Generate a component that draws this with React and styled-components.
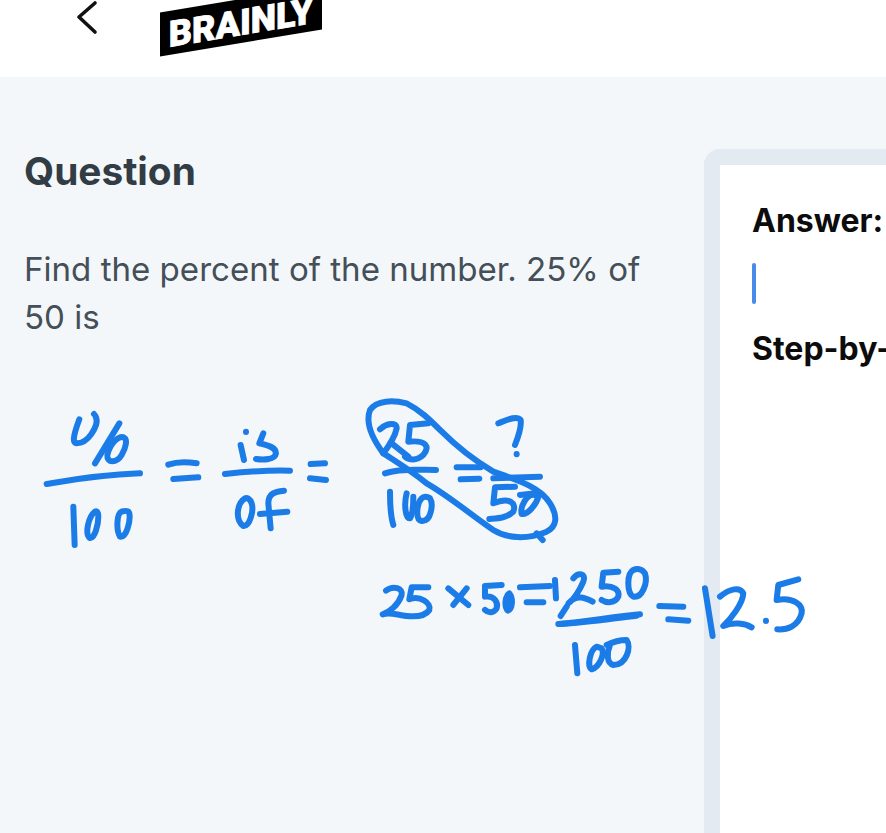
import styled, { createGlobalStyle } from "styled-components";

const GlobalStyle = createGlobalStyle`
	html, body {
		margin: 0;
		padding: 0;
		background: #f4f7fa;
	}
`;

const Page = styled.div`
	position: relative;
	width: 886px;
	height: 833px;
	overflow: hidden;
	display: flex;
	flex-direction: column;
	font-family: "Inter", "Open Sans", sans-serif;
	background: #f4f7fa;
`;

const Header = styled.header`
	flex: 0 0 77px;
	display: flex;
	align-items: flex-start;
	padding-left: 76px;
	background: #fff;
	overflow: hidden;
`;

const BackIcon = styled.svg`
	width: 22px;
	height: 36px;
	margin-right: 62px;
	fill: none;
	stroke: #111;
	stroke-width: 3.6;
	stroke-linecap: round;
	stroke-linejoin: round;
`;

const Logo = styled.div`
	width: 162px;
	height: 44px;
	margin-top: -1px;
	padding-top: 3px;
	box-sizing: border-box;
	display: flex;
	align-items: center;
	justify-content: center;
	background: #000;
	color: #fff;
	font-family: "Roboto", sans-serif;
	font-size: 36px;
	font-weight: 900;
	-webkit-text-stroke: 0.8px #fff;
	transform: skewY(-9.5deg);
`;

const Main = styled.main`
	flex: 1;
	display: flex;
	min-height: 0;
`;

const QuestionColumn = styled.section`
	flex: 0 0 704px;
	padding: 72px 50px 0 24px;
	box-sizing: border-box;
`;

const Title = styled.h2`
	margin: 0 0 52px;
	font-size: 38.8px;
	line-height: 44px;
	font-weight: 700;
	color: #323c45;
`;

const Body = styled.p`
	margin: 0;
	font-size: 33.1px;
	line-height: 48px;
	color: #444f58;
`;

const AnswerCard = styled.section`
	flex: 1;
	margin-top: 72px;
	padding: 40px 0 0 32px;
	background: #fff;
	border: solid #e3eaf1;
	border-width: 16px 0 0 16px;
	border-top-left-radius: 16px;
	overflow: hidden;
	white-space: nowrap;
`;

const CardHeading = styled.h3`
	margin: 0;
	font-size: 32px;
	line-height: 32px;
	font-weight: 700;
	color: #0c0c0c;
`;

const Caret = styled.div`
	width: 3.5px;
	height: 41px;
	margin: 26px 0 29px;
	border-radius: 2px;
	background: #4a8ae8;
`;

const Ink = styled.svg`
	position: absolute;
	left: 0;
	top: 0;
	width: 886px;
	height: 833px;
	pointer-events: none;
	fill: none;
	stroke: #1b7ce8;
	stroke-linecap: round;
	stroke-linejoin: round;
`;

const firstFractions = [
	"M148 88C125 150 130 158 140 160C180 160 198 105 198 105C205 85 192 72 192 72",
	"M268 100L195 220",
	"M285 145C270 130 240 160 232 195C230 220 260 220 275 195C290 170 290 150 285 145",
	"M50 282C120 270 200 255 330 250",
	"M130 350L134 465",
	"M195 365C175 380 165 430 178 443C195 450 205 400 205 380C205 365 200 362 195 365",
	"M275 365C260 370 258 420 270 440C290 445 302 390 298 370C295 360 285 362 275 365",
	"M415 224C440 215 470 215 500 220",
	"M430 267L505 262",
	"M648 125L648 126",
	"M632 165L642 210",
	"M700 130L688 160C710 165 738 170 738 190C735 210 700 210 678 207",
	"M585 252C650 245 720 240 780 242",
	"M645 325C620 340 615 390 640 408C660 410 672 360 665 340C660 325 650 322 645 325",
	"M762 302C735 305 715 310 715 340L722 415",
	"M690 372L772 365",
	"M842 222L885 220",
	"M840 265L888 270",
];

const circledFractions = [
	"M100 190C70 150 45 100 60 60C80 30 130 30 170 40C210 60 240 90 270 120C310 160 370 210 430 245C500 270 570 290 600 340C625 380 620 410 590 425C530 450 470 445 430 420C370 380 300 320 230 280C180 240 130 210 100 190",
	"M560 430L578 450",
	"M90 118C110 100 140 95 140 115C135 140 115 170 100 190",
	"M125 160L175 200",
	"M235 100L180 105L175 155C230 150 240 170 220 195C200 215 175 210 165 200",
	"M105 250C150 235 210 240 258 240",
	"M320 232L392 232",
	"M332 268L388 266",
	"M445 100C470 90 500 75 512 90C515 110 505 140 495 165",
	"M500 192L500 193",
	"M430 265L570 260",
	"M120 305C120 340 122 380 130 405",
	"M170 310C162 340 165 385 180 385C190 370 190 340 190 320",
	"M215 325C200 340 195 390 215 393C245 395 250 340 240 325C230 318 220 320 215 325",
	"M495 290L435 292L430 340C480 320 500 340 490 365C470 385 440 385 418 387",
	"M555 315C530 310 510 350 515 372C535 375 560 340 565 320",
	"M510 315L570 308",
];

const product = [
	"M48 122C70 105 100 115 95 135C85 165 60 185 38 193C60 185 80 195 110 198",
	"M175 112L125 112L118 148C150 135 185 160 178 180C165 200 130 200 110 198",
	"M235 115L295 165",
	"M290 115L250 165",
	"M395 105L345 108L345 140C375 135 385 160 380 175C370 190 355 190 345 180",
	"M413 135C403 150 405 175 414 182C428 175 430 145 418 130",
	"M408 150C406 165 412 175 420 165",
	"M450 112L540 108",
	"M470 157L520 157",
	"M555 90L558 145",
	"M590 170L572 198",
	"M610 85C625 65 650 70 640 95C630 120 610 150 595 160C620 130 650 145 668 155",
	"M745 65L700 68L695 110C730 105 750 120 745 140C735 160 710 160 695 150",
	"M790 60C770 70 770 130 790 140C815 145 835 100 825 70C815 55 800 55 790 60",
	"M565 222C650 215 730 200 810 193",
	"M570 222C650 218 730 205 800 197",
	"M615 285L622 370",
	"M680 290C660 300 650 350 665 358C690 350 705 310 695 295Z",
	"M720 285C710 310 710 340 730 345C770 345 785 290 770 270C750 270 730 275 710 285",
	"M868 168L940 170",
	"M895 208L955 212",
	"M1005 115L1028 258",
	"M1050 140C1080 115 1110 110 1120 130C1120 160 1080 210 1060 228C1090 215 1125 220 1145 232",
	"M1188 212L1188 213",
	"M1285 88L1225 105L1220 150C1270 140 1300 165 1295 190C1285 230 1250 240 1222 238",
];

// traced in the coordinates of 3x crops, hence the scale
const Strokes = ({ x, y, paths }) => (
	<g transform={`translate(${x} ${y}) scale(0.3333)`} strokeWidth="18">
		{paths.map((d) => (
			<path key={d} d={d} />
		))}
	</g>
);

const App = () => (
	<Page>
		<GlobalStyle />
		<Header>
			<BackIcon viewBox="0 0 22 36">
				<path d="M19 3L3 17L19 32" />
			</BackIcon>
			<Logo>BRAINLY</Logo>
		</Header>
		<Main>
			<QuestionColumn>
				<Title>Question</Title>
				<Body>Find the percent of the number. 25% of 50 is</Body>
			</QuestionColumn>
			<AnswerCard>
				<CardHeading>Answer:</CardHeading>
				<Caret />
				<CardHeading>Step-by-step explanation:</CardHeading>
			</AnswerCard>
		</Main>
		<Ink viewBox="0 0 886 833">
			<Strokes x={30} y={390} paths={firstFractions} />
			<Strokes x={350} y={390} paths={circledFractions} />
			<Strokes x={370} y={550} paths={product} />
		</Ink>
	</Page>
);

export default App;
